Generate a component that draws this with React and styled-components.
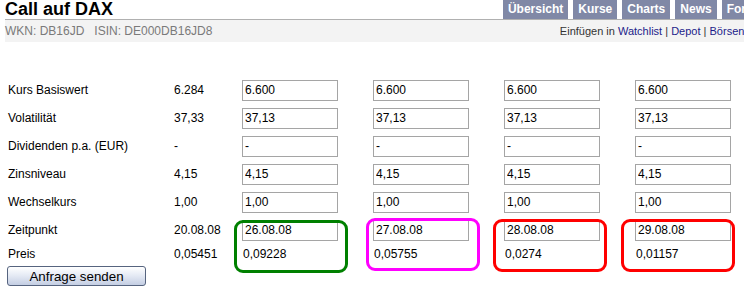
import React from "react";
import styled, { createGlobalStyle } from "styled-components";

const GlobalStyle = createGlobalStyle`
  html, body {
    margin: 0;
    padding: 0;
    background: #fff;
    overflow: hidden;
  }
  body {
    font-family: "Liberation Sans", Arial, sans-serif;
  }
`;

const tabs = ["Übersicht", "Kurse", "Charts", "News", "Forum"];

const rows = [
  { label: "Kurs Basiswert", base: "6.284", values: ["6.600", "6.600", "6.600", "6.600"] },
  { label: "Volatilität", base: "37,33", values: ["37,13", "37,13", "37,13", "37,13"] },
  { label: "Dividenden p.a. (EUR)", base: "-", values: ["-", "-", "-", "-"] },
  { label: "Zinsniveau", base: "4,15", values: ["4,15", "4,15", "4,15", "4,15"] },
  { label: "Wechselkurs", base: "1,00", values: ["1,00", "1,00", "1,00", "1,00"] },
];

const scenarios = [
  { date: "26.08.08", price: "0,09228", ring: "#008000", offset: -8, top: 4 },
  { date: "27.08.08", price: "0,05755", ring: "#ff00ff", offset: -7, top: 2 },
  { date: "28.08.08", price: "0,0274", ring: "#ff0000", offset: -11, top: 3 },
  { date: "29.08.08", price: "0,01157", ring: "#ff0000", offset: -14, top: 3 },
];

const App = () => {
  return (
    <Page>
      <GlobalStyle />
      <Header>
        <Title>Call auf DAX</Title>
        <Tabs>
          {tabs.map((t) => (
            <Tab key={t}>{t}</Tab>
          ))}
        </Tabs>
      </Header>
      <SubBar>
        <Ident>WKN: DB16JD&nbsp;&nbsp;&nbsp;ISIN: DE000DB16JD8</Ident>
        <Actions>
          Einfügen in <a>Watchlist</a> | <a>Depot</a> | <a>Börsenspiel</a>
        </Actions>
      </SubBar>

      <Table>
        {rows.map((r) => (
          <Row key={r.label}>
            <Label>{r.label}</Label>
            <Base>{r.base}</Base>
            {r.values.map((v, i) => (
              <Cell key={i}>
                <Field defaultValue={v} />
              </Cell>
            ))}
          </Row>
        ))}
        <Row>
          <Label>Zeitpunkt</Label>
          <Base>20.08.08</Base>
          {scenarios.map((s) => (
            <Cell key={s.date}>
              <Field defaultValue={s.date} />
              <Ring $color={s.ring} $offset={s.offset} $top={s.top} />
            </Cell>
          ))}
        </Row>
        <Row $short>
          <Label>Preis</Label>
          <Base>0,05451</Base>
          {scenarios.map((s) => (
            <Price key={s.date}>{s.price}</Price>
          ))}
        </Row>
      </Table>

      <SendButton>Anfrage senden</SendButton>
    </Page>
  );
};

export default App;

const Page = styled.div`
  width: 770px;
  padding-left: 5px;
  color: #000;
`;

const Header = styled.div`
  display: flex;
  align-items: flex-end;
  height: 19px;
  border-bottom: 1px solid #b0b0b0;
`;

const Title = styled.h1`
  margin: 0;
  font-size: 18px;
  line-height: 19px;
  font-weight: bold;
  color: #000;
`;

const Tabs = styled.div`
  display: flex;
  gap: 5px;
  margin-left: auto;
  padding-right: 6px;
`;

const Tab = styled.div`
  height: 19px;
  line-height: 18px;
  padding: 0 5px;
  background: #8088a6;
  color: #fff;
  font-size: 12px;
  font-weight: bold;
  white-space: nowrap;
`;

const SubBar = styled.div`
  display: flex;
  align-items: center;
  justify-content: space-between;
  height: 22px;
  background: #f3f3f3;
`;

const Ident = styled.div`
  font-size: 12px;
  color: #7a7a7a;
`;

const Actions = styled.div`
  padding-right: 8px;
  font-size: 11px;
  color: #333;
  white-space: nowrap;

  a {
    color: #1c1c8a;
    text-decoration: none;
  }
`;

const Table = styled.div`
  margin: 33px 0 0 3px;
  padding-top: 1px;
`;

const Row = styled.div`
  display: grid;
  grid-template-columns: 166px 68px repeat(4, 131px);
  align-items: center;
  height: ${(p) => (p.$short ? "19px" : "28px")};
  font-size: 12px;
`;

const Label = styled.div``;

const Base = styled.div``;

const Cell = styled.div`
  position: relative;
  height: 21px;
`;

const Field = styled.input`
  box-sizing: border-box;
  width: 96px;
  height: 21px;
  margin: 0;
  padding: 0 2px;
  border: 1px solid #a5a5a5;
  font-family: "Liberation Sans", Arial, sans-serif;
  font-size: 12px;
  color: #000;
  background: #fff;
  outline: none;
`;

const Ring = styled.div`
  position: absolute;
  left: ${(p) => p.$offset}px;
  top: ${(p) => p.$top - 4}px;
  width: 114px;
  height: 53px;
  box-sizing: border-box;
  border: 3px solid ${(p) => p.$color};
  border-radius: 9px;
  pointer-events: none;
`;

const Price = styled.div`
  padding-left: 1px;
`;

const SendButton = styled.button`
  display: block;
  box-sizing: border-box;
  width: 139px;
  height: 20px;
  margin: 3px 0 0 2px;
  padding: 0;
  border: 1px solid #56647f;
  border-radius: 3px;
  background: linear-gradient(#ffffff, #e6ebf5 45%, #c4cee3);
  font-family: "Liberation Sans", Arial, sans-serif;
  font-size: 13.33px;
  color: #000;
`;
